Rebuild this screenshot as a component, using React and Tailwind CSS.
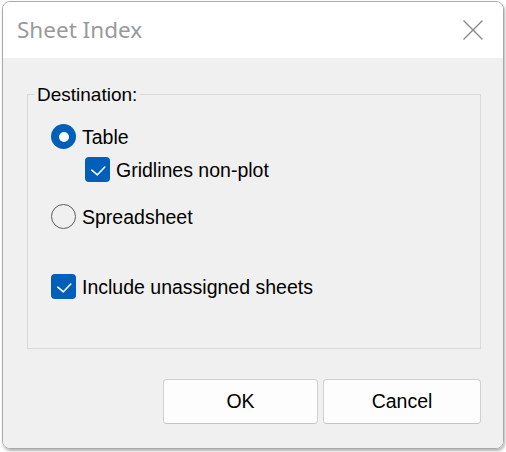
import React from "react";

function Check() {
  return (
    <svg width="25" height="25" viewBox="0 0 25 25" className="block">
      <path d="M6.8 13.2 L12.4 17.8 L19.8 10" fill="none" stroke="#ffffff" strokeWidth="1.6" strokeLinecap="round" strokeLinejoin="round" />
    </svg>
  );
}

function Checkbox({ label }) {
  return (
    <div className="flex items-center gap-[6px] h-[25px]">
      <div className="w-[25px] h-[25px] rounded-[4px] bg-[#005fb8] shrink-0">
        <Check />
      </div>
      <span className="text-[19.5px] leading-[22px] text-black">{label}</span>
    </div>
  );
}

function Radio({ label, checked }) {
  return (
    <div className="flex items-center gap-[6px] h-[25px]">
      {checked ? (
        <div className="w-[25px] h-[25px] rounded-full bg-[#005fb8] flex items-center justify-center shrink-0">
          <div className="w-[10px] h-[10px] rounded-full bg-white" />
        </div>
      ) : (
        <div className="w-[25px] h-[25px] rounded-full border-[1.5px] border-[#5c5c5c] shrink-0" />
      )}
      <span className="text-[19.5px] leading-[22px] text-black">{label}</span>
    </div>
  );
}

export default function App() {
  return (
    <div className="w-[506px] h-[452px] bg-white overflow-hidden" style={{ fontFamily: '"Liberation Sans", Arial, sans-serif' }}>
      <div className="ml-[2px] mt-[1px] w-[502px] h-[448px] rounded-[8px] border border-[#a9a9a9] overflow-hidden flex flex-col shadow-[1px_2px_3px_rgba(0,0,0,0.3)]">
        <div className="h-[56px] bg-white flex items-center justify-between pl-[14px] pr-[20px] shrink-0">
          <span className="text-[22.5px] leading-[32px] text-[#9a9a9a]" style={{ fontFamily: '"Noto Sans", "Open Sans", sans-serif' }}>
            Sheet Index
          </span>
          <svg width="20" height="20" viewBox="0 0 20 20" className="block">
            <path d="M0.5 0.5 L19.5 19.5 M19.5 0.5 L0.5 19.5" stroke="#8a8a8a" strokeWidth="1.4" fill="none" />
          </svg>
        </div>
        <div className="flex-1 bg-[#f0f0f0] flex flex-col">
          <div className="relative mt-[36px] ml-[24px] w-[454px] h-[255px] border border-[#d9d9d9]">
            <span className="absolute left-[6px] top-[-11px] px-[3px] bg-[#f0f0f0] text-[19px] leading-[22px] text-black">
              Destination:
            </span>
            <div className="flex flex-col pl-[23px] pt-[29px]">
              <Radio label="Table" checked />
              <div className="ml-[34px] mt-[8px]">
                <Checkbox label="Gridlines non-plot" />
              </div>
              <div className="mt-[22px]">
                <Radio label="Spreadsheet" />
              </div>
              <div className="mt-[45px]">
                <Checkbox label="Include unassigned sheets" />
              </div>
            </div>
          </div>
          <div className="ml-[24px] w-[454px] mt-[30px] flex justify-end gap-[5px]">
            <button className="w-[155px] h-[45px] rounded-[4px] border border-[#d0d0d0] border-b-[#c4c4c4] bg-[#fdfdfd] text-[19.5px] text-black">
              OK
            </button>
            <button className="w-[158px] h-[45px] rounded-[4px] border border-[#d0d0d0] border-b-[#c4c4c4] bg-[#fdfdfd] text-[19.5px] text-black">
              Cancel
            </button>
          </div>
        </div>
      </div>
    </div>
  );
}
